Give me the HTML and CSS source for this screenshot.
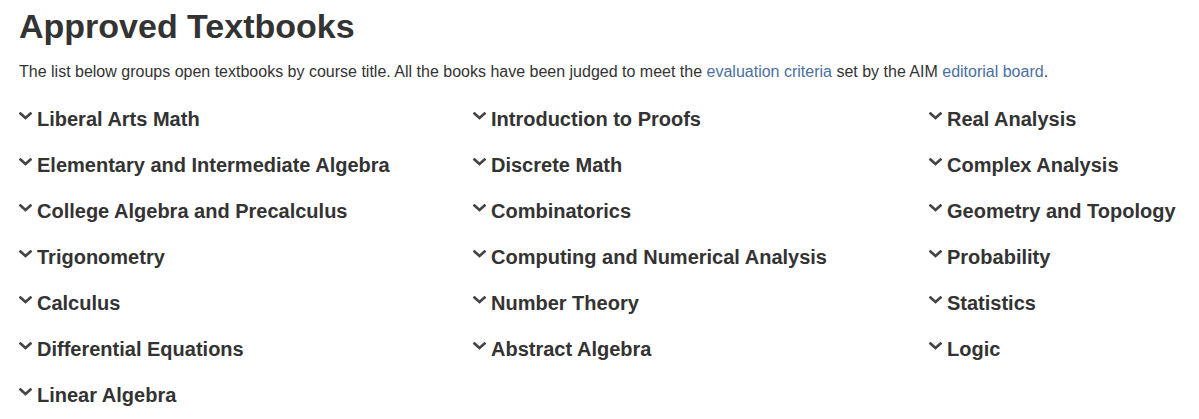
FILE: index.html
```html
<!DOCTYPE html>
<html lang="en">
<head>
<meta charset="utf-8">
<title>Approved Textbooks</title>
<link rel="stylesheet" href="styles.css">
</head>
<body>
<div class="page">
  <h1 class="title">Approved Textbooks</h1>
  <p class="intro">The list below groups open textbooks by course title. All the books have been judged to meet the <a href="#" class="link">evaluation criteria</a> set by the AIM <a href="#" class="link">editorial board</a>.</p>
  <div class="courses">
    <ul class="col">
      <li class="item"><svg class="chev" viewBox="0 0 13 8"><path d="M1.5 1.5 L6.5 6 L11.5 1.5"/></svg>Liberal Arts Math</li>
      <li class="item"><svg class="chev" viewBox="0 0 13 8"><path d="M1.5 1.5 L6.5 6 L11.5 1.5"/></svg>Elementary and Intermediate Algebra</li>
      <li class="item"><svg class="chev" viewBox="0 0 13 8"><path d="M1.5 1.5 L6.5 6 L11.5 1.5"/></svg>College Algebra and Precalculus</li>
      <li class="item"><svg class="chev" viewBox="0 0 13 8"><path d="M1.5 1.5 L6.5 6 L11.5 1.5"/></svg>Trigonometry</li>
      <li class="item"><svg class="chev" viewBox="0 0 13 8"><path d="M1.5 1.5 L6.5 6 L11.5 1.5"/></svg>Calculus</li>
      <li class="item"><svg class="chev" viewBox="0 0 13 8"><path d="M1.5 1.5 L6.5 6 L11.5 1.5"/></svg>Differential Equations</li>
      <li class="item"><svg class="chev" viewBox="0 0 13 8"><path d="M1.5 1.5 L6.5 6 L11.5 1.5"/></svg>Linear Algebra</li>
    </ul>
    <ul class="col">
      <li class="item"><svg class="chev" viewBox="0 0 13 8"><path d="M1.5 1.5 L6.5 6 L11.5 1.5"/></svg>Introduction to Proofs</li>
      <li class="item"><svg class="chev" viewBox="0 0 13 8"><path d="M1.5 1.5 L6.5 6 L11.5 1.5"/></svg>Discrete Math</li>
      <li class="item"><svg class="chev" viewBox="0 0 13 8"><path d="M1.5 1.5 L6.5 6 L11.5 1.5"/></svg>Combinatorics</li>
      <li class="item"><svg class="chev" viewBox="0 0 13 8"><path d="M1.5 1.5 L6.5 6 L11.5 1.5"/></svg>Computing and Numerical Analysis</li>
      <li class="item"><svg class="chev" viewBox="0 0 13 8"><path d="M1.5 1.5 L6.5 6 L11.5 1.5"/></svg>Number Theory</li>
      <li class="item"><svg class="chev" viewBox="0 0 13 8"><path d="M1.5 1.5 L6.5 6 L11.5 1.5"/></svg>Abstract Algebra</li>
    </ul>
    <ul class="col">
      <li class="item"><svg class="chev" viewBox="0 0 13 8"><path d="M1.5 1.5 L6.5 6 L11.5 1.5"/></svg>Real Analysis</li>
      <li class="item"><svg class="chev" viewBox="0 0 13 8"><path d="M1.5 1.5 L6.5 6 L11.5 1.5"/></svg>Complex Analysis</li>
      <li class="item"><svg class="chev" viewBox="0 0 13 8"><path d="M1.5 1.5 L6.5 6 L11.5 1.5"/></svg>Geometry and Topology</li>
      <li class="item"><svg class="chev" viewBox="0 0 13 8"><path d="M1.5 1.5 L6.5 6 L11.5 1.5"/></svg>Probability</li>
      <li class="item"><svg class="chev" viewBox="0 0 13 8"><path d="M1.5 1.5 L6.5 6 L11.5 1.5"/></svg>Statistics</li>
      <li class="item"><svg class="chev" viewBox="0 0 13 8"><path d="M1.5 1.5 L6.5 6 L11.5 1.5"/></svg>Logic</li>
    </ul>
  </div>
</div>
</body>
</html>
```

FILE: styles.css
```css
html, body {
  margin: 0;
  padding: 0;
  background: #ffffff;
}

body {
  font-family: "Liberation Sans", Arial, sans-serif;
  color: #333333;
}

.page {
  padding: 0 19px;
}

.title {
  margin: 8px 0 0;
  font-size: 34px;
  line-height: 1.1;
  font-weight: bold;
  color: #333333;
}

.intro {
  margin: 16px 0 0;
  font-size: 16px;
  line-height: 22px;
  color: #333333;
}

.link {
  color: #4b6f9f;
  text-decoration: none;
}

.courses {
  display: grid;
  grid-template-columns: 454px 456px 1fr;
  margin-top: 25px;
}

.col {
  list-style: none;
  margin: 0;
  padding: 0;
  display: flex;
  flex-direction: column;
  gap: 24px;
}

.item {
  display: flex;
  align-items: flex-start;
  font-size: 20px;
  line-height: 22px;
  font-weight: bold;
  color: #333333;
  white-space: nowrap;
}

.chev {
  width: 13px;
  height: 8px;
  margin: 4px 5px 0 0;
  flex: none;
}

.chev path {
  fill: none;
  stroke: #444444;
  stroke-width: 2.6;
  stroke-linecap: square;
  stroke-linejoin: miter;
}
```
